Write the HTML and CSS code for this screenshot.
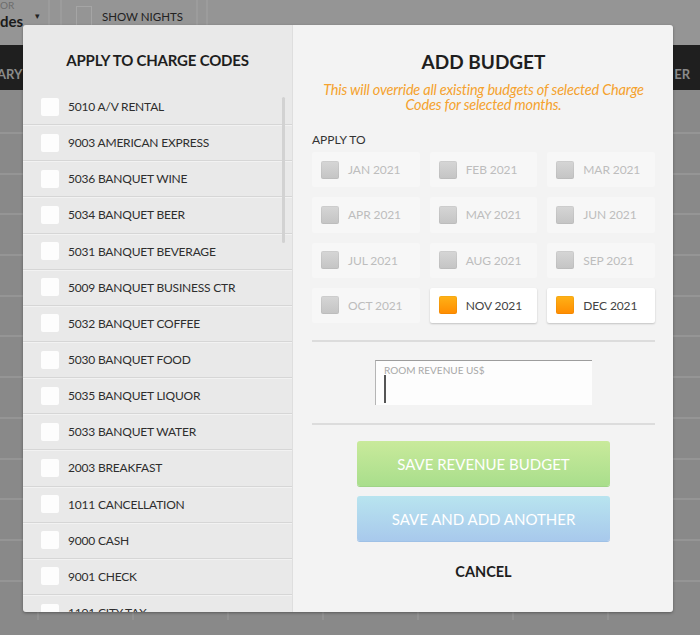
FILE: index.html
```html
<!DOCTYPE html>
<html>
<head>
<meta charset="utf-8">
<link rel="stylesheet" href="styles.css">
</head>
<body>
<div class="page">
  <div class="topbar">
    <div class="select">
      <span class="select-label">OR</span>
      <span class="select-value">des</span>
      <span class="select-caret">&#9662;</span>
    </div>
    <div class="toggle">
      <span class="toggle-box"></span>
      <span class="toggle-text">SHOW NIGHTS</span>
    </div>
    <div class="topbar-rest"></div>
  </div>
  <div class="darkbar">
    <div class="dark-left">ARY</div>
    <div class="dark-right">ER</div>
  </div>
  <div class="grid-bg">
    <div class="grid-row first"></div>
    <div class="grid-row"></div><div class="grid-row"></div><div class="grid-row"></div>
    <div class="grid-row"></div><div class="grid-row"></div><div class="grid-row"></div>
    <div class="grid-row"></div><div class="grid-row"></div><div class="grid-row"></div>
    <div class="grid-row"></div><div class="grid-row"></div><div class="grid-row"></div>
  </div>
</div>

<div class="modal">
  <div class="left">
    <h2 class="left-title">APPLY TO CHARGE CODES</h2>
    <div class="code-list">
      <div class="code-row"><span class="cb"></span><span>5010 A/V RENTAL</span></div>
      <div class="code-row"><span class="cb"></span><span>9003 AMERICAN EXPRESS</span></div>
      <div class="code-row"><span class="cb"></span><span>5036 BANQUET WINE</span></div>
      <div class="code-row"><span class="cb"></span><span>5034 BANQUET BEER</span></div>
      <div class="code-row"><span class="cb"></span><span>5031 BANQUET BEVERAGE</span></div>
      <div class="code-row"><span class="cb"></span><span>5009 BANQUET BUSINESS CTR</span></div>
      <div class="code-row"><span class="cb"></span><span>5032 BANQUET COFFEE</span></div>
      <div class="code-row"><span class="cb"></span><span>5030 BANQUET FOOD</span></div>
      <div class="code-row"><span class="cb"></span><span>5035 BANQUET LIQUOR</span></div>
      <div class="code-row"><span class="cb"></span><span>5033 BANQUET WATER</span></div>
      <div class="code-row"><span class="cb"></span><span>2003 BREAKFAST</span></div>
      <div class="code-row"><span class="cb"></span><span>1011 CANCELLATION</span></div>
      <div class="code-row"><span class="cb"></span><span>9000 CASH</span></div>
      <div class="code-row"><span class="cb"></span><span>9001 CHECK</span></div>
      <div class="code-row"><span class="cb"></span><span>1101 CITY TAX</span></div>
      <div class="scrollbar"></div>
    </div>
  </div>
  <div class="right">
    <h1 class="right-title">ADD BUDGET</h1>
    <p class="warning">This will override all existing budgets of selected Charge Codes for selected months.</p>
    <div class="apply-label">APPLY TO</div>
    <div class="months">
      <div class="month"><span class="mcb"></span>JAN 2021</div>
      <div class="month"><span class="mcb"></span>FEB 2021</div>
      <div class="month"><span class="mcb"></span>MAR 2021</div>
      <div class="month"><span class="mcb"></span>APR 2021</div>
      <div class="month"><span class="mcb"></span>MAY 2021</div>
      <div class="month"><span class="mcb"></span>JUN 2021</div>
      <div class="month"><span class="mcb"></span>JUL 2021</div>
      <div class="month"><span class="mcb"></span>AUG 2021</div>
      <div class="month"><span class="mcb"></span>SEP 2021</div>
      <div class="month"><span class="mcb"></span>OCT 2021</div>
      <div class="month active"><span class="mcb"></span>NOV 2021</div>
      <div class="month active"><span class="mcb"></span>DEC 2021</div>
    </div>
    <hr class="sep">
    <div class="field">
      <span class="field-label">ROOM REVENUE US$</span>
      <span class="caret"></span>
    </div>
    <hr class="sep sep2">
    <button class="btn btn-green">SAVE REVENUE BUDGET</button>
    <button class="btn btn-blue">SAVE AND ADD ANOTHER</button>
    <div class="cancel">CANCEL</div>
  </div>
</div>
</body>
</html>
```

FILE: styles.css
```css
* { box-sizing: border-box; }
html, body { margin: 0; padding: 0; }
body {
  width: 700px;
  height: 635px;
  overflow: hidden;
  font-family: "Lato", "Liberation Sans", sans-serif;
  background: #959595;
  position: relative;
}

/* background page (dimmed) */
.page { width: 700px; height: 635px; display: flex; flex-direction: column; }
.topbar { height: 45px; display: flex; background: #959595; }
.select {
  width: 50px;
  border-right: 2px solid #9c9c9c;
  position: relative;
}
.select-label { position: absolute; left: 0; top: 0; font-size: 10px; line-height: 11px; color: #6d6d6d; }
.select-value { position: absolute; left: 0; top: 12px; font-size: 15px; line-height: 18px; font-weight: 700; color: #1a1a1a; }
.select-caret { position: absolute; left: 35px; top: 11px; font-size: 9px; line-height: 10px; color: #222; }
.toggle {
  margin-left: 10px;
  width: 138px;
  border-left: 2px solid #9c9c9c;
  border-right: 2px solid #9c9c9c;
  display: flex;
  align-items: flex-start;
  padding: 8px 0 0 14px;
  gap: 10px;
}
.toggle-box { width: 16px; height: 20px; border: 1px solid #a5a5a5; border-bottom: none; margin-top: -2px; }
.toggle-text { font-size: 11.5px; color: #222; margin-top: 2px; }
.topbar-rest { margin-left: 8px; border-left: 2px solid #9c9c9c; flex: 1; }
.darkbar {
  height: 45px;
  background: #1f1f1f;
  display: flex;
  justify-content: space-between;
  align-items: center;
  color: #8a8a8a;
  font-size: 13px;
  font-weight: 700;
}
.dark-left { margin-left: -3px; padding-top: 12px; }
.dark-right { margin-right: 10px; padding-top: 12px; }
.grid-bg {
  flex: 1;
  background: #898989;
  display: flex;
  flex-direction: column;
}
.grid-row {
  height: 40.7px;
  flex: none;
  border-top: 2px solid #959595;
  background-image: repeating-linear-gradient(90deg, transparent 0 37px, #929292 37px 39px, transparent 39px 95px);
}
.grid-row.first { height: 42px; border-top: none; }

/* modal */
.modal {
  position: absolute;
  left: 23px;
  top: 25px;
  width: 650px;
  height: 587px;
  display: flex;
  border-radius: 3px;
  overflow: hidden;
  box-shadow: 0 1px 3px rgba(0,0,0,0.35);
}
.left {
  width: 270px;
  background: #e9e9e9;
  display: flex;
  flex-direction: column;
  border-right: 1px solid #dedede;
}
.left-title {
  margin: 0;
  height: 64px;
  padding-top: 25px;
  text-align: center;
  font-size: 15px;
  letter-spacing: -0.2px;
  font-weight: 700;
  color: #1e1e1e;
  line-height: 20px;
}
.code-list { position: relative; flex: 1; overflow: hidden; }
.code-row {
  height: 36.15px;
  display: flex;
  align-items: center;
  gap: 9px;
  padding-left: 18px;
  border-bottom: 1px solid #d6d6d6;
  box-shadow: 0 1px 0 #f2f2f2;
  font-size: 12px;
  letter-spacing: -0.2px;
  color: #2e2e2e;
}
.cb {
  width: 18px;
  height: 18px;
  background: #fdfdfd;
  border-radius: 2px;
  flex: none;
}
.scrollbar {
  position: absolute;
  left: 259px;
  top: 8px;
  width: 3px;
  height: 146px;
  border-radius: 2px;
  background: #d2d2d2;
}

.right {
  flex: 1;
  background: #f3f3f3;
  padding: 0 18px 0 19px;
  display: flex;
  flex-direction: column;
}
.right-title {
  margin: 23px 0 0;
  line-height: 28px;
  text-align: center;
  font-size: 19px;
  font-weight: 700;
  color: #1e1e1e;
}
.warning {
  margin: 7px 0 0;
  line-height: 14.5px;
  text-align: center;
  font-size: 14.5px;
  font-style: italic;
  letter-spacing: -0.2px;
  color: #f5a22e;
}
.apply-label {
  margin-top: 20px;
  line-height: 16px;
  font-size: 12px;
  color: #333;
}
.months {
  margin-top: 4px;
  display: grid;
  grid-template-columns: repeat(3, 1fr);
  grid-auto-rows: 35.25px;
  gap: 10px;
}
.month {
  background: #f7f7f7;
  display: flex;
  align-items: center;
  gap: 9px;
  padding-left: 9px;
  font-size: 12px;
  letter-spacing: -0.1px;
  color: #bdbdbd;
  border-radius: 2px;
}
.mcb {
  width: 18px;
  height: 18px;
  border-radius: 2px;
  background: linear-gradient(#d6d6d6, #c4c4c4);
  box-shadow: inset 0 0 0 1px rgba(0,0,0,0.04);
  flex: none;
}
.month.active {
  background: #fff;
  color: #444;
  box-shadow: 0 1px 2px rgba(0,0,0,0.2);
}
.month.active .mcb { background: linear-gradient(#ffb217, #ff8c00); }

.sep {
  margin: 17px 0 0;
  border: none;
  height: 2px;
  background: #dcdcdc;
}
.sep2 { margin-top: 18px; }
.field {
  margin: 18px auto 0;
  width: 217px;
  height: 45px;
  background: #fdfdfd;
  border-top: 1px solid #9d9d9d;
  border-left: 1px solid #b5b5b5;
  position: relative;
}
.field-label {
  position: absolute;
  left: 8px;
  top: 3px;
  font-size: 10px;
  color: #a8a8a8;
}
.caret {
  position: absolute;
  left: 8px;
  top: 14px;
  width: 2px;
  height: 28px;
  background: #555;
}
.btn {
  display: block;
  margin: 16px auto 0;
  width: 253px;
  height: 45px;
  border: none;
  border-radius: 3px;
  color: #fff;
  font-family: inherit;
  font-size: 15px;
  letter-spacing: 0;
}
.btn-green { background: linear-gradient(#c9ea9b, #a9de8c); box-shadow: 0 1px 0 #9fd487; }
.btn-blue { margin-top: 10px; background: linear-gradient(#b8e4ef, #a8c9ec); box-shadow: 0 1px 0 #9fc1e6; }
.cancel {
  margin-top: 21px;
  line-height: 20px;
  text-align: center;
  font-size: 14.5px;
  font-weight: 700;
  color: #1e1e1e;
}
```
